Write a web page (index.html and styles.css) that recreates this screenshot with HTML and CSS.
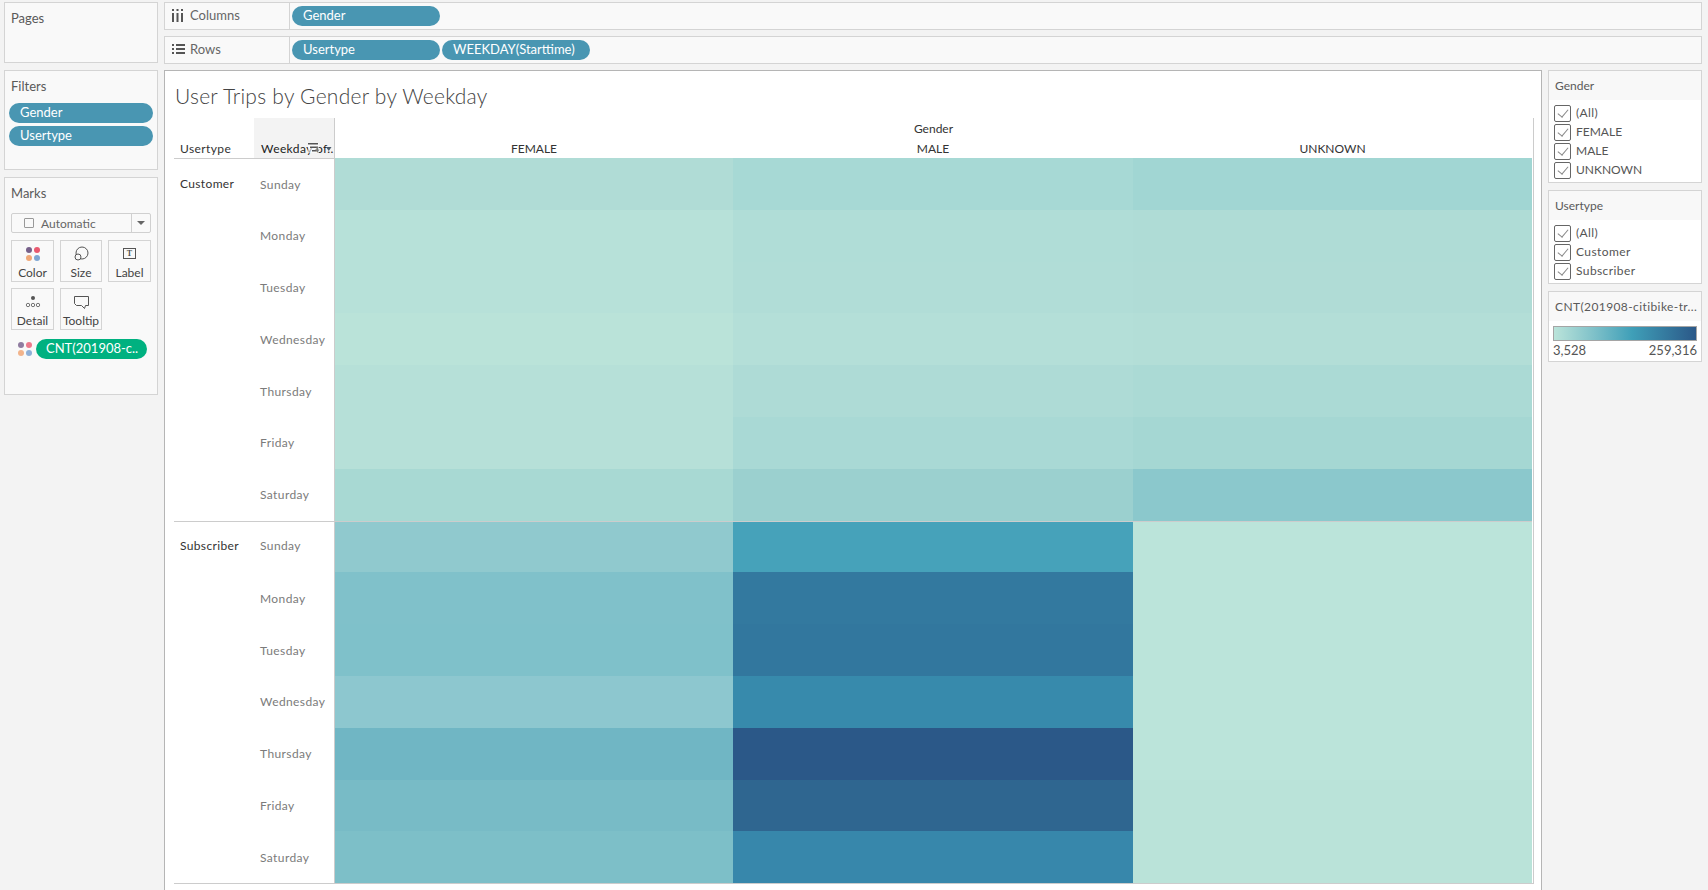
FILE: index.html
```html
<!DOCTYPE html>
<html lang="en">
<head>
   <meta charset="UTF-8">
   <title>User Trips by Gender by Weekday</title>
   <link rel="stylesheet" href="styles.css">
</head>
<body>
   <div class="app">
      <div class="leftcol">
         <div class="panel pages"><div class="panel-title">Pages</div></div>
         <div class="panel filters">
            <div class="panel-title">Filters</div>
            <div class="pill filter-pill">Gender</div>
            <div class="pill filter-pill">Usertype</div>
         </div>
         <div class="panel marks">
            <div class="panel-title">Marks</div>
            <div class="dropdown">
               <span class="dd-main"><span class="dd-box"></span>Automatic</span>
               <span class="dd-arrow"></span>
            </div>
            <div class="mark-btns">
               <div class="mark-btn">
                  <svg width="20" height="20" viewBox="0 0 20 20">
                     <circle cx="6" cy="6" r="3" fill="#76608a"/><circle cx="14" cy="6" r="3" fill="#e8596f"/>
                     <circle cx="6" cy="14" r="3" fill="#f0a878"/><circle cx="14" cy="14" r="3" fill="#7ea6d3"/>
                  </svg>
                  <span>Color</span>
               </div>
               <div class="mark-btn">
                  <svg width="20" height="20" viewBox="0 0 20 20">
                     <circle cx="11" cy="9" r="6" fill="none" stroke="#555"/>
                     <circle cx="7" cy="13" r="3" fill="#f9f9f9" stroke="#555"/>
                  </svg>
                  <span>Size</span>
               </div>
               <div class="mark-btn">
                  <div class="label-icon">T</div>
                  <span>Label</span>
               </div>
               <div class="mark-btn">
                  <svg width="20" height="20" viewBox="0 0 20 20">
                     <circle cx="10" cy="6" r="2" fill="#555"/>
                     <circle cx="5" cy="13" r="1.7" fill="none" stroke="#555" stroke-width=".8"/>
                     <circle cx="10" cy="13" r="1.7" fill="none" stroke="#555" stroke-width=".8"/>
                     <circle cx="15" cy="13" r="1.7" fill="none" stroke="#555" stroke-width=".8"/>
                  </svg>
                  <span>Detail</span>
               </div>
               <div class="mark-btn">
                  <svg width="20" height="20" viewBox="0 0 20 20">
                     <path d="M3.500 4.500H17.500V13.500H14.500L13.500 16.500L10.500 13.500H5.500L3.500 11.500Z" fill="none" stroke="#555"/>
                  </svg>
                  <span>Tooltip</span>
               </div>
            </div>
            <div class="mark-field">
               <svg width="16" height="16" viewBox="0 0 16 16">
                  <circle cx="4" cy="4" r="3" fill="#8f7ca0"/><circle cx="12" cy="4" r="3" fill="#ec7a8c"/>
                  <circle cx="4" cy="12" r="3" fill="#f2b48c"/><circle cx="12" cy="12" r="3" fill="#8fb0d8"/>
               </svg>
               <div class="pill green-pill">CNT(201908-c..</div>
            </div>
         </div>
      </div>

      <div class="main">
         <div class="shelf">
            <div class="shelf-label">
               <svg width="14" height="14" viewBox="0 0 14 14">
                  <path d="M1 5H3V14H1ZM5.500 5H7.500V14H5.500ZM10 5H12V14H10ZM1 1H3V3H1ZM5.500 1H7.500V3H5.500ZM10 1H12V3H10Z" fill="#555"/>
               </svg>
               Columns
            </div>
            <div class="pill shelf-pill">Gender</div>
         </div>
         <div class="shelf">
            <div class="shelf-label">
               <svg width="14" height="14" viewBox="0 0 14 14">
                  <path d="M1 2H3V4H1ZM5 2H14V4H5ZM1 6H3V8H1ZM5 6H14V8H5ZM1 10H3V12H1ZM5 10H14V12H5Z" fill="#555"/>
               </svg>
               Rows
            </div>
            <div class="pill shelf-pill">Usertype</div>
            <div class="pill shelf-pill">WEEKDAY(Starttime)</div>
         </div>

         <div class="content">
            <div class="chart">
               <div class="chart-title">User Trips by Gender by Weekday</div>
               <div class="heat">
                  <div class="hd hd-user">Usertype</div>
                  <div class="hd hd-week">
                     <span class="hd-week-text">Weekday of..</span>
                     <svg class="sort-icon" width="24" height="10" viewBox="0 0 24 10">
                        <rect width="11" height="10" fill="#fff" fill-opacity=".6"/>
                        <path d="M0 0H10V1.500H0ZM2 3.500H10V5H2ZM4 7H8V8.500H4Z" fill="#555"/>
                        <path d="M8.500 4H10V6.500H11.500L9.250 9.500L7 6.500H8.500Z" fill="#777"/>
                        <path d="M18 4H23.500L20.750 8Z" fill="#4a5a6a"/>
                     </svg>
                  </div>
                  <div class="hd hd-gender">Gender</div>
                  <div class="hd hd-col">FEMALE</div>
                  <div class="hd hd-col">MALE</div>
                  <div class="hd hd-col">UNKNOWN</div>

                  <div class="group top-line">Customer</div>
                  <div class="day top-line">Sunday</div>
                  <div style="background:#b0dcd6"></div><div style="background:#a7d9d5"></div><div style="background:#a1d6d3"></div>
                  <div class="day">Monday</div>
                  <div style="background:#b7e1d9"></div><div style="background:#b0ddd7"></div><div style="background:#afdcd6"></div>
                  <div class="day">Tuesday</div>
                  <div style="background:#b7e1d9"></div><div style="background:#b1ddd7"></div><div style="background:#b0dcd6"></div>
                  <div class="day">Wednesday</div>
                  <div style="background:#bae3d9"></div><div style="background:#b4dfd8"></div><div style="background:#b3ded7"></div>
                  <div class="day">Thursday</div>
                  <div style="background:#b6e0d8"></div><div style="background:#aedbd6"></div><div style="background:#abdad5"></div>
                  <div class="day">Friday</div>
                  <div style="background:#b6e0d8"></div><div style="background:#a9d9d5"></div><div style="background:#a5d7d3"></div>
                  <div class="day">Saturday</div>
                  <div style="background:#a8d9d3"></div><div style="background:#9bd0cf"></div><div style="background:#8bc8cc"></div>

                  <div class="group group-sub top-line">Subscriber</div>
                  <div class="day day-sub top-line">Sunday</div>
                  <div class="top-line" style="background:#90c9ce"></div><div class="top-line" style="background:#46a2ba"></div><div class="top-line" style="background:#bbe4da"></div>
                  <div class="day">Monday</div>
                  <div style="background:#80c1ca"></div><div style="background:#33799f"></div><div style="background:#bbe4da"></div>
                  <div class="day">Tuesday</div>
                  <div style="background:#7fc1ca"></div><div style="background:#32779e"></div><div style="background:#bbe4da"></div>
                  <div class="day">Wednesday</div>
                  <div style="background:#8dc7cf"></div><div style="background:#378aac"></div><div style="background:#bbe4da"></div>
                  <div class="day">Thursday</div>
                  <div style="background:#70b6c4"></div><div style="background:#2b5888"></div><div style="background:#bbe4da"></div>
                  <div class="day">Friday</div>
                  <div style="background:#78bbc6"></div><div style="background:#2f6690"></div><div style="background:#bae3d9"></div>
                  <div class="day">Saturday</div>
                  <div style="background:#7dbfc8"></div><div style="background:#3787ab"></div><div style="background:#bae3d9"></div>
               </div>
            </div>

            <div class="rightcol">
               <div class="card">
                  <div class="card-title">Gender</div>
                  <div class="checks">
                     <label class="check wide">(All)</label>
                     <label class="check">FEMALE</label>
                     <label class="check">MALE</label>
                     <label class="check">UNKNOWN</label>
                  </div>
               </div>
               <div class="card">
                  <div class="card-title">Usertype</div>
                  <div class="checks">
                     <label class="check wide">(All)</label>
                     <label class="check wide">Customer</label>
                     <label class="check wide">Subscriber</label>
                  </div>
               </div>
               <div class="card legend-card">
                  <div class="card-title wide">CNT(201908-citibike-tr...</div>
                  <div class="legend">
                     <div class="legend-bar"></div>
                     <div class="legend-nums"><span>3,528</span><span>259,316</span></div>
                  </div>
               </div>
            </div>
         </div>
      </div>
   </div>
</body>
</html>
```

FILE: styles.css
```css
* {
   box-sizing: border-box;
}

body {
   margin: 0;
   background-color: #f3f3f3;
   font: 12px "Lato", "Open Sans", sans-serif;
   color: #555;
}

.wide {
   letter-spacing: .4px;
}

.app {
   display: flex;
   gap: 6px;
   height: 890px;
   padding: 2px 6px 0 4px;
   overflow: hidden;
}

.leftcol {
   display: flex;
   flex-direction: column;
   gap: 7px;
   width: 154px;
   flex: none;
}

.panel {
   background-color: #f9f9f9;
   border: 1px solid #d4d4d4;
}

.panel-title {
   height: 29px;
   padding: 7px 6px 0;
   font-size: 13px;
   color: #5a5a5a;
}

.pages {
   height: 61px;
}

.filters {
   height: 100px;
}

.marks {
   height: 218px;
}

.pill {
   height: 20px;
   line-height: 19px;
   padding-left: 11px;
   border-radius: 10px;
   background-color: #4996b2;
   color: #fff;
   font-size: 13px;
   white-space: nowrap;
}

.filter-pill {
   width: 144px;
   margin: 3px 0 0 4px;
}

.dropdown {
   display: flex;
   height: 20px;
   margin: 6px 6px 0;
   border: 1px solid #d0d0d0;
   border-radius: 2px;
}

.dd-main {
   display: flex;
   align-items: center;
   gap: 7px;
   flex: 1;
   padding-left: 12px;
   color: #666;
}

.dd-box {
   width: 10px;
   height: 10px;
   border: 1px solid #999;
   border-radius: 1px;
}

.dd-arrow {
   position: relative;
   width: 19px;
   border-left: 1px solid #d0d0d0;
}

.dd-arrow::after {
   content: "";
   position: absolute;
   left: 5px;
   top: 7px;
   border: 4px solid transparent;
   border-top: 4px solid #666;
}

.mark-btns {
   display: grid;
   grid-template-columns: 43px 42px 43px;
   gap: 6px;
   margin: 7px 6px 0;
}

.mark-btn {
   display: flex;
   flex-direction: column;
   align-items: center;
   justify-content: space-between;
   height: 42px;
   padding: 3px 0 1px;
   border: 1px solid #d4d4d4;
}

.mark-btn span {
   color: #444;
}

.label-icon {
   width: 13px;
   height: 11px;
   margin-top: 4px;
   border: 1px solid #555;
   text-align: center;
   font: bold 8px/9px "Liberation Serif", serif;
}

.mark-field {
   display: flex;
   align-items: center;
   gap: 3px;
   margin: 9px 0 0 12px;
}

.green-pill {
   width: 111px;
   padding-left: 10px;
   background-color: #00b180;
}

.main {
   display: flex;
   flex-direction: column;
   flex: 1;
   min-width: 0;
}

.shelf {
   display: flex;
   align-items: center;
   gap: 2px;
   height: 28px;
   margin-bottom: 6px;
   background-color: #f9f9f9;
   border: 1px solid #d4d4d4;
}

.shelf-label {
   display: flex;
   align-items: center;
   gap: 5px;
   width: 125px;
   height: 100%;
   padding: 0 0 2px 6px;
   border-right: 1px solid #d4d4d4;
   font-size: 13px;
   color: #666;
}

.shelf-pill {
   width: 148px;
}

.content {
   display: flex;
   gap: 6px;
   flex: 1;
}

.chart {
   width: 1378px;
   padding: 0 0 0 9px;
   background-color: #fff;
   border: 1px solid #b5b5b5;
   border-bottom: 0;
}

.chart-title {
   height: 47px;
   line-height: 50px;
   padding-left: 1px;
   font-size: 21px;
   font-weight: 300;
   letter-spacing: .25px;
   color: #444;
}

.heat {
   display: grid;
   grid-template-columns: 80px 81px 398px 400px 399px;
   grid-template-rows: 20px 20px repeat(14, 51.8px);
   width: 1359px;
   border-right: 1px solid #ccc;
   border-bottom: 1px solid #ccc;
   box-sizing: content-box;
}

.hd {
   color: #333;
   text-align: center;
   line-height: 22px;
}

.hd-user,
.hd-week {
   grid-row: span 2;
   padding: 20px 0 0 6px;
   text-align: left;
   letter-spacing: .4px;
}

.hd-week {
   position: relative;
   overflow: hidden;
   padding-left: 7px;
   background-color: #f3f3f3;
   border-right: 1px solid #ccc;
   color: #222;
   white-space: nowrap;
}

.sort-icon {
   position: absolute;
   right: 2px;
   top: 25px;
}

.hd-gender {
   grid-column: span 3;
}

.group {
   grid-row: span 7;
   height: 100%;
   padding: 17px 0 0 6px;
   letter-spacing: .35px;
   color: #333;
}

.group-sub {
   padding-top: 16px;
}

.day {
   display: flex;
   align-items: center;
   padding-left: 6px;
   border-right: 1px solid #ccc;
   letter-spacing: .4px;
   color: #7b7b7b;
}

.day-sub {
   padding-bottom: 2px;
}

.top-line {
   border-top: 1px solid #ccc;
}

.rightcol {
   display: flex;
   flex-direction: column;
   gap: 7px;
   width: 154px;
}

.card {
   background-color: #fff;
   border: 1px solid #d4d4d4;
}

.card-title {
   height: 29px;
   padding: 7px 6px 0;
   background-color: #f8f8f8;
   white-space: nowrap;
   color: #5a5a5a;
}

.checks {
   padding: 3px 0 3px 6px;
}

.check {
   position: relative;
   display: block;
   height: 19px;
   line-height: 19px;
   padding-left: 21px;
   color: #555;
}

.check::before {
   content: "";
   position: absolute;
   left: -1px;
   top: 2px;
   width: 15px;
   height: 15px;
   border: 1px solid #666;
   border-radius: 2px;
}

.check::after {
   content: "";
   position: absolute;
   left: 5px;
   top: 4px;
   width: 5px;
   height: 9px;
   border-right: 1.500px solid #888;
   border-bottom: 1.500px solid #888;
   transform: rotate(40deg);
}

.legend-card {
   height: 71px;
}

.legend {
   padding: 5px 4px 0;
}

.legend-bar {
   height: 15px;
   border: 1px solid #a5a5a5;
   background: linear-gradient(to right, #bbe4da, #7fc1c9 28%, #3f9fb8 55%, #2b5888);
}

.legend-nums {
   display: flex;
   justify-content: space-between;
   margin-top: 1px;
   font-size: 13px;
}
```
